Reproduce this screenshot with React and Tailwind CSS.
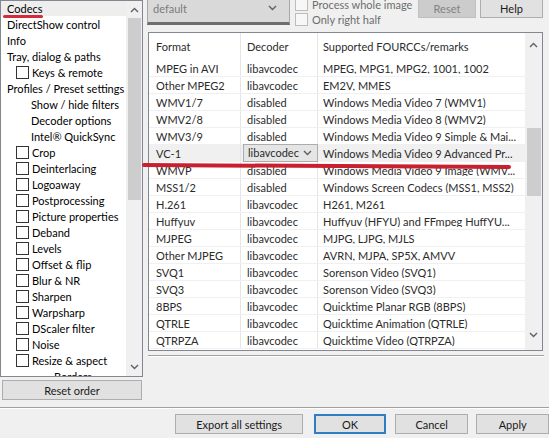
const tree = [
  { t: 'Codecs', l: 0, sel: true },
  { t: 'DirectShow control', l: 0 },
  { t: 'Info', l: 0 },
  { t: 'Tray, dialog & paths', l: 0 },
  { t: 'Keys & remote', l: 1, cb: true },
  { t: 'Profiles / Preset settings', l: 0 },
  { t: 'Show / hide filters', l: 1 },
  { t: 'Decoder options', l: 1 },
  { t: 'Intel® QuickSync', l: 1 },
  { t: 'Crop', l: 1, cb: true },
  { t: 'Deinterlacing', l: 1, cb: true },
  { t: 'Logoaway', l: 1, cb: true },
  { t: 'Postprocessing', l: 1, cb: true },
  { t: 'Picture properties', l: 1, cb: true },
  { t: 'Deband', l: 1, cb: true },
  { t: 'Levels', l: 1, cb: true },
  { t: 'Offset & flip', l: 1, cb: true },
  { t: 'Blur & NR', l: 1, cb: true },
  { t: 'Sharpen', l: 1, cb: true },
  { t: 'Warpsharp', l: 1, cb: true },
  { t: 'DScaler filter', l: 1, cb: true },
  { t: 'Noise', l: 1, cb: true },
  { t: 'Resize & aspect', l: 1, cb: true },
  { t: 'Borders', l: 2 },
];

const codecs = [
  ['MPEG in AVI', 'libavcodec', 'MPEG, MPG1, MPG2, 1001, 1002'],
  ['Other MPEG2', 'libavcodec', 'EM2V, MMES'],
  ['WMV1/7', 'disabled', 'Windows Media Video 7 (WMV1)'],
  ['WMV2/8', 'disabled', 'Windows Media Video 8 (WMV2)'],
  ['WMV3/9', 'disabled', 'Windows Media Video 9 Simple & Mai...'],
  ['VC-1', 'libavcodec', 'Windows Media Video 9 Advanced Pr...', true],
  ['WMVP', 'disabled', 'Windows Media Video 9 Image (WMV...'],
  ['MSS1/2', 'disabled', 'Windows Screen Codecs (MSS1, MSS2)'],
  ['H.261', 'libavcodec', 'H261, M261'],
  ['Huffyuv', 'libavcodec', 'Huffyuv (HFYU) and FFmpeg HuffYU...'],
  ['MJPEG', 'libavcodec', 'MJPG, LJPG, MJLS'],
  ['Other MJPEG', 'libavcodec', 'AVRN, MJPA, SP5X, AMVV'],
  ['SVQ1', 'libavcodec', 'Sorenson Video (SVQ1)'],
  ['SVQ3', 'libavcodec', 'Sorenson Video (SVQ3)'],
  ['8BPS', 'libavcodec', 'Quicktime Planar RGB (8BPS)'],
  ['QTRLE', 'libavcodec', 'Quicktime Animation (QTRLE)'],
  ['QTRPZA', 'libavcodec', 'Quicktime Video (QTRPZA)'],
];

function Chevron({ up = false, className = '' }) {
  return (
    <svg width="9" height="6" viewBox="0 0 9 6" className={className}>
      <polyline
        points={up ? '1,5 4.5,1.5 8,5' : '1,1 4.5,4.5 8,1'}
        fill="none"
        stroke="#606060"
        strokeWidth="1.4"
      />
    </svg>
  );
}

function Box({ disabled = false }) {
  return (
    <span
      className={`w-[13px] h-[13px] shrink-0 border ${disabled ? 'border-[#bcbcbc] bg-[#f7f7f7]' : 'border-[#333] bg-white'}`}
    />
  );
}

function Button({ children, className = '', focus = false, disabled = false }) {
  return (
    <div
      className={`h-[20px] flex items-center justify-center whitespace-nowrap ${
        focus ? 'border-2 border-[#2f7ec4]' : disabled ? 'border border-[#bfbfbf]' : 'border border-[#adadad]'
      } ${disabled ? 'bg-[#cccccc] text-[#838383]' : 'bg-[#e1e1e1] text-[#1a1a1a]'} ${className}`}
    >
      {children}
    </div>
  );
}

export default function App() {
  return (
    <div className="w-[549px] h-[438px] bg-[#f0f0f0] relative overflow-hidden flex flex-col font-['Lato',sans-serif] text-[11px] leading-none text-black">
      <div className="flex h-[407px]">
        {/* Left tree */}
        <div className="w-[143px] flex flex-col">
          <div className="h-[377px] border border-[#828790] bg-white flex overflow-hidden">
            <div className="flex-1 -mt-[1px] overflow-hidden">
              {tree.map((it, i) => (
                <div
                  key={i}
                  className={`h-[16px] flex items-center whitespace-nowrap ${it.sel ? 'bg-[#eeeeee]' : ''} ${
                    it.l === 0 ? 'pl-[6px]' : it.l === 1 ? (it.cb ? 'pl-[15px] gap-[3px]' : 'pl-[30px]') : 'pl-[53px]'
                  }`}
                >
                  {it.cb && <Box />}
                  <span>{it.t}</span>
                </div>
              ))}
            </div>
            <div className="w-[16px] bg-[#f0f0f0] flex flex-col items-center">
              <div className="h-[17px] flex items-center justify-center">
                <Chevron up />
              </div>
              <div className="w-[13px] h-[182px] bg-[#cdcdcd]" />
              <div className="flex-1" />
              <div className="h-[19px] flex items-center justify-center">
                <Chevron />
              </div>
            </div>
          </div>
          <Button className="mt-[3px] ml-[2px] w-[140px] h-[19px]">Reset order</Button>
        </div>

        {/* Right side */}
        <div className="flex-1 pl-[4px] flex flex-col">
          <div className="h-[28px] flex items-start">
            <div className="w-[143px] h-[25px] border-x border-[#a8a8a8] border-b-[3px] border-b-[#6e6e6e] bg-[#d9d9d9] flex items-center justify-between pl-[5px] pr-[12px] pb-[6px] text-[#7c7c7c]">
              <span>default</span>
              <Chevron />
            </div>
            <div className="ml-[5px] -mt-[2px] flex flex-col gap-[2px] text-[#6d6d6d] whitespace-nowrap">
              <div className="flex items-center gap-[4px] h-[13px]">
                <Box disabled />
                <span>Process whole image</span>
              </div>
              <div className="flex items-center gap-[4px] h-[13px]">
                <Box disabled />
                <span>Only right half</span>
              </div>
            </div>
            <div className="flex-1" />
            <Button disabled className="w-[58px] h-[19px] -mt-[2px]">Reset</Button>
            <Button className="w-[63px] h-[19px] -mt-[2px] ml-[4px] mr-[6px]">Help</Button>
          </div>

          <div className="mt-[4px] ml-[1px] w-[395px] h-[319px] border border-[#828790] bg-white flex text-[#2b2b2b]">
            <div className="w-[376px] flex flex-col">
              <div className="h-[27px] flex items-center">
                <div className="w-[92px] h-full pl-[7px] flex items-center border-r border-[#e5e5e5]">Format</div>
                <div className="w-[77px] h-full pl-[6px] flex items-center border-r border-[#e5e5e5]">Decoder</div>
                <div className="flex-1 pl-[5px] flex items-center">Supported FOURCCs/remarks</div>
              </div>
              {codecs.map(([f, d, s, sel], i) => (
                <div
                  key={i}
                  className={`h-[17px] flex items-center border-b border-[#f0f0f0] whitespace-nowrap ${sel ? 'bg-[#f0f0f0]' : ''}`}
                >
                  <div className="w-[92px] h-full pl-[7px] flex items-center border-r border-[#e5e5e5]">{f}</div>
                  {sel ? (
                    <div className="w-[77px] h-full flex items-center pl-[2px]">
                      <div className="w-[75px] h-[18px] -mt-[1px] border border-[#acacac] bg-[#e5e5e5] flex items-center justify-between pl-[4px] pr-[5px]">
                        <span>{d}</span>
                        <Chevron />
                      </div>
                    </div>
                  ) : (
                    <div className="w-[77px] h-full pl-[6px] flex items-center border-r border-[#e5e5e5]">{d}</div>
                  )}
                  <div className="flex-1 pl-[5px] overflow-hidden">{s}</div>
                </div>
              ))}
            </div>
            <div className="w-[17px] bg-[#f0f0f0] flex flex-col items-center">
              <div className="h-[22px] pt-[9px] flex justify-center">
                <Chevron up />
              </div>
              <div className="h-[73px]" />
              <div className="w-[14px] h-[68px] bg-[#cdcdcd]" />
              <div className="flex-1" />
              <div className="h-[18px] flex items-start justify-center">
                <Chevron />
              </div>
            </div>
          </div>
          <div className="mt-[4px] ml-[1px] w-[396px] h-[2px] border-t border-[#a0a0a0] border-b border-b-white" />
        </div>
      </div>

      {/* Separator */}
      <div className="h-[2px] border-t border-[#a0a0a0] border-b border-b-white" />

      {/* Bottom buttons */}
      <div className="flex items-start pt-[5px]">
        <div className="w-[176px]" />
        <Button className="w-[129px]">Export all settings</Button>
        <Button focus className="w-[72px] ml-[11px]">OK</Button>
        <Button className="w-[74px] ml-[9px]">Cancel</Button>
        <Button className="w-[73px] ml-[8px]">Apply</Button>
      </div>

      {/* Red annotation marks */}
      <div className="absolute left-[3px] top-[15px] w-[40px] h-[3px] rounded-full bg-[#d42a3a]" />
      <div className="absolute left-[142px] top-[164px] w-[369px] h-[4px] rounded-full bg-[#c8202f] rotate-[0.3deg]" />
    </div>
  );
}
